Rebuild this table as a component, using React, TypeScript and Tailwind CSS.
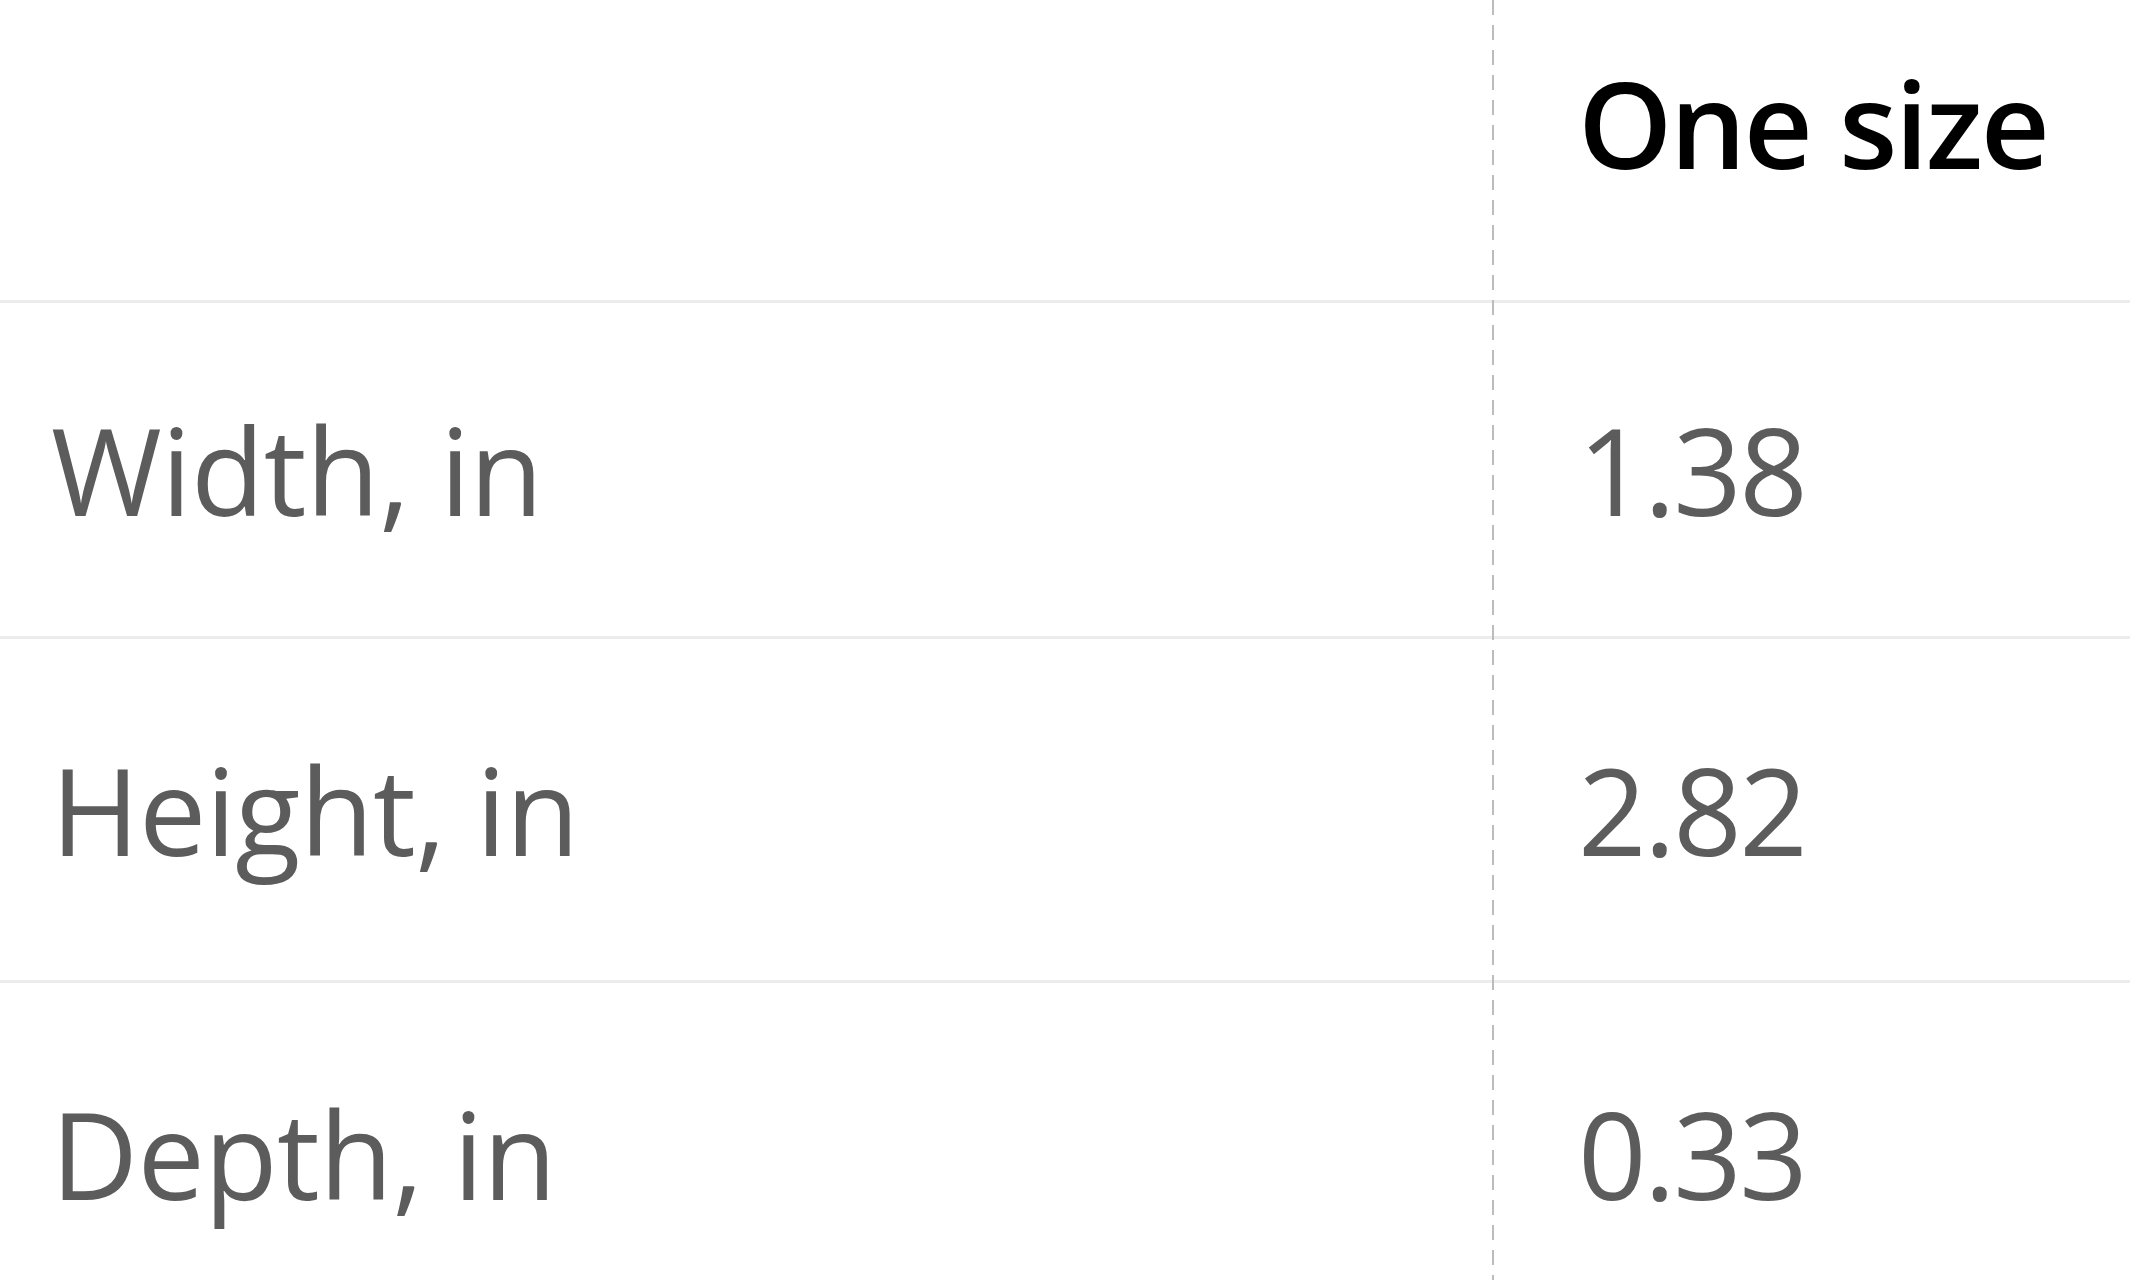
import React from 'react';

interface Row {
  label: string;
  value: string;
  height: string;
}

const rows: Row[] = [
  { label: 'Width, in', value: '1.38', height: 'h-[336px]' },
  { label: 'Height, in', value: '2.82', height: 'h-[344px]' },
  { label: 'Depth, in', value: '0.33', height: 'h-[344px]' },
];

export default function App() {
  return (
    <div
      className="w-full h-[1280px] overflow-hidden bg-white"
      style={{ fontFamily: '"Open Sans", "Noto Sans", sans-serif' }}
    >
      <div className="flex">
        {/* labels */}
        <div className="w-[1492px] shrink-0 flex flex-col">
          <div className="h-[303px] border-b-[3px] border-[#ececec]" />
          {rows.map((row) => (
            <div
              key={row.label}
              className={`${row.height} flex items-center pl-[51px] border-b-[3px] border-[#ececec] text-[120px] leading-none tracking-[-0.6px] text-[#5c5c5c]`}
            >
              {row.label}
            </div>
          ))}
        </div>

        {/* dashed column divider */}
        <div className="w-[2px] shrink-0 bg-[repeating-linear-gradient(to_bottom,#bcbcbc_0px,#bcbcbc_15px,transparent_15px,transparent_25px)]" />

        {/* values */}
        <div className="flex-1 flex flex-col">
          <div className="h-[303px] border-b-[3px] border-[#ececec] pl-[84px] pt-[63px] text-[120px] leading-none tracking-[-2.5px] font-semibold text-black">
            One size
          </div>
          {rows.map((row) => (
            <div
              key={row.value}
              className={`${row.height} flex items-center pl-[84px] border-b-[3px] border-[#ececec] text-[120px] leading-none tracking-[-2.5px] text-[#5c5c5c]`}
            >
              {row.value}
            </div>
          ))}
        </div>
      </div>
    </div>
  );
}
